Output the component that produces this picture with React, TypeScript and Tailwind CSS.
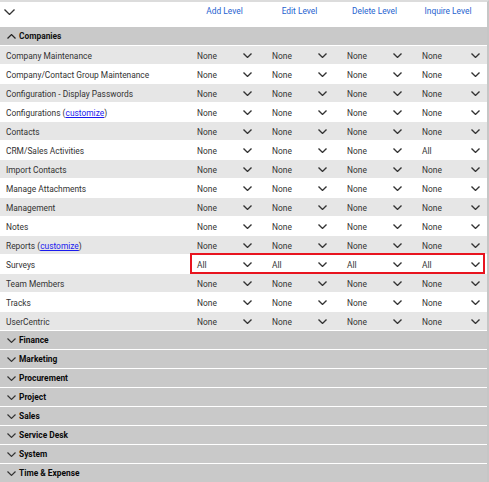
import React from "react";

const rows: { label: string; link?: boolean; vals: string[] }[] = [
  { label: "Company Maintenance", vals: ["None", "None", "None", "None"] },
  { label: "Company/Contact Group Maintenance", vals: ["None", "None", "None", "None"] },
  { label: "Configuration - Display Passwords", vals: ["None", "None", "None", "None"] },
  { label: "Configurations", link: true, vals: ["None", "None", "None", "None"] },
  { label: "Contacts", vals: ["None", "None", "None", "None"] },
  { label: "CRM/Sales Activities", vals: ["None", "None", "None", "All"] },
  { label: "Import Contacts", vals: ["None", "None", "None", "None"] },
  { label: "Manage Attachments", vals: ["None", "None", "None", "None"] },
  { label: "Management", vals: ["None", "None", "None", "None"] },
  { label: "Notes", vals: ["None", "None", "None", "None"] },
  { label: "Reports", link: true, vals: ["None", "None", "None", "None"] },
  { label: "Surveys", vals: ["All", "All", "All", "All"] },
  { label: "Team Members", vals: ["None", "None", "None", "None"] },
  { label: "Tracks", vals: ["None", "None", "None", "None"] },
  { label: "UserCentric", vals: ["None", "None", "None", "None"] },
];

const sections = ["Finance", "Marketing", "Procurement", "Project", "Sales", "Service Desk", "System", "Time & Expense"];

const Down = ({ w = 9, h = 5, sw = 1.4 }: { w?: number; h?: number; sw?: number }) => (
  <svg width={w} height={h} viewBox={`0 0 ${w} ${h}`} fill="none" stroke="#333" strokeWidth={sw}>
    <path d={`M0.5 0.5 L${w / 2} ${h - 0.6} L${w - 0.5} 0.5`} />
  </svg>
);

const Up = () => (
  <svg width={9} height={5} viewBox="0 0 9 5" fill="none" stroke="#222" strokeWidth={1.3}>
    <path d="M0.5 4.5 L4.5 0.6 L8.5 4.5" />
  </svg>
);

const font = { fontFamily: "Roboto, 'Noto Sans', sans-serif" };

export default function App() {
  return (
    <div className="w-[489px] h-[482px] overflow-hidden bg-white border-t-2 border-[#dcdcdc] border-r-2 border-r-[#c6c6c6] text-[8.4px] text-[#333]" style={font}>
      {/* header */}
      <div className="flex h-[25px]">
        <div className="w-[190px] pl-[4px] pt-[7px]">
          <Down w={11} h={6} sw={1.4} />
        </div>
        {["Add Level", "Edit Level", "Delete Level", "Inquire Level"].map((h, i) => (
          <div key={h} className={`${i === 3 ? "w-[72px]" : "w-[75px]"} text-center pr-[6px] pt-[3px] text-[#1f63d0]`}>
            {h}
          </div>
        ))}
      </div>
      {/* Companies */}
      <div className="h-[19px] bg-[#c9c9c9] border-b border-white flex items-center pl-[7px] pt-[1px] gap-[3px] font-bold text-[#111]">
        <Up />
        <span>Companies</span>
      </div>
      {rows.map((r, idx) => (
        <div
          key={r.label}
          className={`relative h-[19px] border-b border-white flex items-center pt-[2px] ${idx % 2 === 0 ? "bg-[#e6e6e6]" : "bg-white"}`}
        >
          <div className="w-[190px] pl-[6px]">
            {r.label}
            {r.link && (
              <>
                {" ("}
                <span className="text-[#1a1aee] underline">customize</span>
                {")"}
              </>
            )}
          </div>
          {r.vals.map((v, i) => (
            <div key={i} className={`${i === 3 ? "w-[72px]" : "w-[75px]"} flex items-center justify-between pl-[7px] ${i === 3 ? "pr-[7px]" : "pr-[13px]"}`}>
              <span>{v}</span>
              <Down />
            </div>
          ))}
          {r.label === "Surveys" && (
            <div className="absolute left-[190px] top-[-2px] w-[295px] h-[21px] border-2 border-[#e8141f]" />
          )}
        </div>
      ))}
      {sections.map((s) => (
        <div key={s} className="h-[19px] bg-[#c9c9c9] border-b border-white flex items-center pl-[7px] pt-[1px] gap-[3px] font-bold text-[#0a0a0a]">
          <Down w={9} h={5} sw={1.2} />
          <span>{s}</span>
        </div>
      ))}
    </div>
  );
}
